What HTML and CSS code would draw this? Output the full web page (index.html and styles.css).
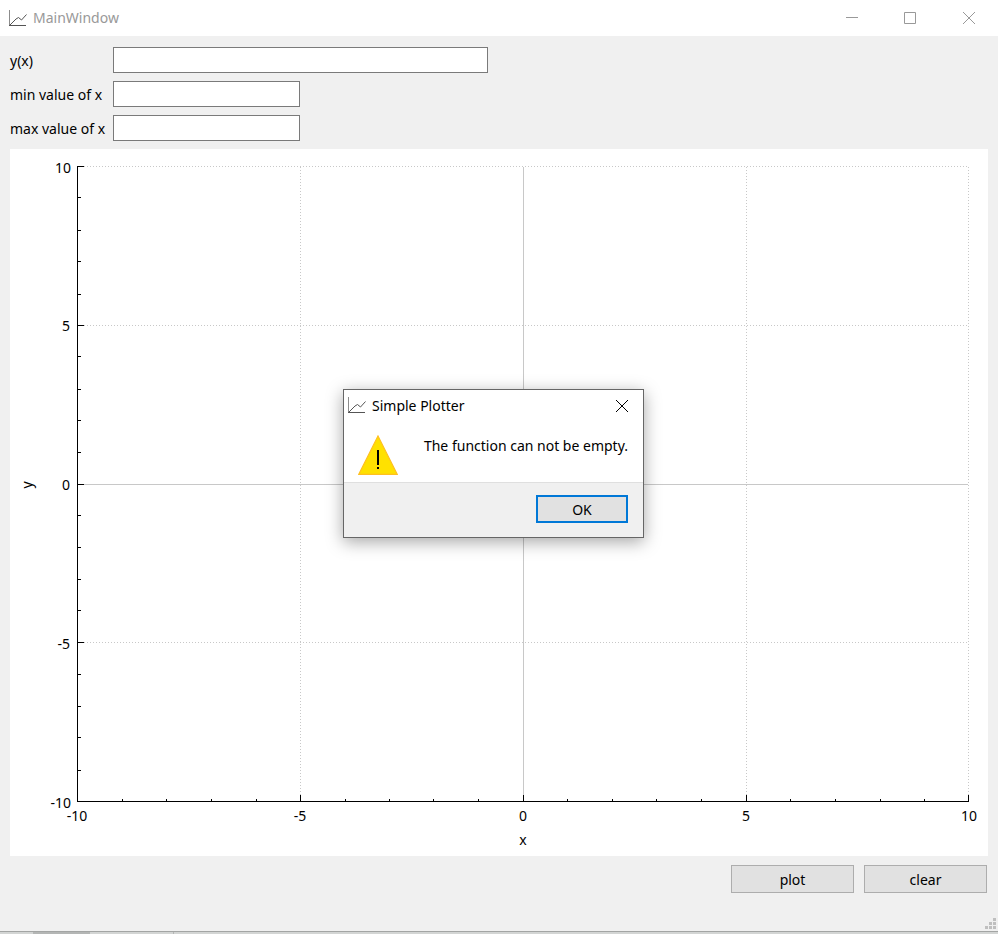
FILE: index.html
```html
<!DOCTYPE html>
<html lang="en">
<head>
<meta charset="utf-8">
<title>MainWindow</title>
<link rel="stylesheet" href="styles.css">
</head>
<body>
<svg class="defs" aria-hidden="true">
  <symbol id="app-icon" viewBox="0 0 18 17">
    <path d="M.5 0V16" stroke="#8c8c8c" fill="none"/>
    <path d="M0 15.500H17" stroke="#555" fill="none"/>
    <path d="M1 15L7 9L9.500 7.500L12.500 10L17.500 4.500" stroke="#555" fill="none"/>
  </symbol>
</svg>
<div class="window">
  <header class="titlebar">
    <svg class="app-icon"><use href="#app-icon"/></svg>
    <h1 class="title">MainWindow</h1>
    <div class="controls">
      <button class="control" type="button" aria-label="Minimize"><svg class="glyph" viewBox="0 0 12 12"><path d="M0 5.500H12"/></svg></button>
      <button class="control" type="button" aria-label="Maximize"><svg class="glyph" viewBox="0 0 12 12"><path d="M.5.5H11.500V11.500H.5Z"/></svg></button>
      <button class="control control-close" type="button" aria-label="Close"><svg class="glyph" viewBox="0 0 12 12"><path d="M0 0L12 12M12 0L0 12"/></svg></button>
    </div>
  </header>
  <main class="content">
    <form class="form">
      <label for="fn">y(x)</label><input class="field field-wide" id="fn" type="text">
      <label for="min">min value of x</label><input class="field" id="min" type="text">
      <label for="max">max value of x</label><input class="field" id="max" type="text">
    </form>
    <svg class="plot" viewBox="0 0 978 707" role="img" aria-label="Empty plot, x and y from -10 to 10">
      <g class="grid">
        <path d="M68 17.500H958M68 176.500H958M68 493.500H958M290.500 18V652M736.500 18V652M958.500 18V652"/>
      </g>
      <path class="zero" d="M68 335.500H958M513.500 18V652"/>
      <path class="axis" d="M67.500 17V653M67 652.500H959"/>
      <path class="axis" d="M67 17.500h7M67 176.500h7M67 335.500h7M67 493.500h7M290.500 653v-7M513.500 653v-7M736.500 653v-7M958.500 653v-7"/>
      <path class="axis" d="M67 48.500h4M67 81.500h4M67 112.500h4M67 145.500h4M67 207.500h4M67 240.500h4M67 271.500h4M67 303.500h4M67 366.500h4M67 398.500h4M67 430.500h4M67 461.500h4M67 525.500h4M67 557.500h4M67 588.500h4M67 621.500h4"/>
      <path class="axis" d="M112.500 653v-3M156.500 653v-3M201.500 653v-3M246.500 653v-3M335.500 653v-3M379.500 653v-3M423.500 653v-3M468.500 653v-3M557.500 653v-3M602.500 653v-3M646.500 653v-3M691.500 653v-3M780.500 653v-3M825.500 653v-3M870.500 653v-3M914.500 653v-3"/>
      <g class="ticks-y">
        <text x="61" y="24">10</text><text x="60" y="182">5</text><text x="60" y="341">0</text><text x="60" y="500">-5</text><text x="61" y="659">-10</text>
      </g>
      <g class="ticks-x">
        <text x="67" y="672">-10</text><text x="290" y="672">-5</text><text x="513" y="672">0</text><text x="736" y="672">5</text><text x="959" y="672">10</text>
        <text x="513" y="696">x</text>
        <text transform="translate(22 336) rotate(-90)">y</text>
      </g>
    </svg>
    <div class="actions">
      <button class="button" type="button">plot</button>
      <button class="button" type="button">clear</button>
    </div>
  </main>
  <footer class="statusbar">
    <svg class="grip" viewBox="0 0 11 11" aria-hidden="true"><path d="M8 0h3v3h-3zM4 4h3v3h-3zM8 4h3v3h-3zM0 8h3v3h-3zM4 8h3v3h-3zM8 8h3v3h-3z"/></svg>
  </footer>
  <div class="dialog" role="alertdialog" aria-labelledby="dialog-title" aria-describedby="dialog-text">
    <div class="dialog-title">
      <svg class="app-icon"><use href="#app-icon"/></svg>
      <h2 class="title" id="dialog-title">Simple Plotter</h2>
      <button class="dialog-close" type="button" aria-label="Close"><svg class="glyph" viewBox="0 0 12 12"><path d="M0 0L12 12M12 0L0 12"/></svg></button>
    </div>
    <div class="dialog-body">
      <svg class="warning" viewBox="0 0 40 40" aria-hidden="true">
        <path d="M20 1L39.300 39.400H.7Z" fill="#ffe100" stroke="#ffc020" stroke-width="1.200"/>
        <path d="M19 15h2v15h-2zM19 32h2v2h-2z" fill="#000"/>
      </svg>
      <p class="message" id="dialog-text">The function can not be empty.</p>
    </div>
    <div class="dialog-footer"><button class="button button-default" type="button">OK</button></div>
  </div>
</div>
<div class="taskbar"><span class="task"></span><span class="task-group"></span></div>
</body>
</html>
```
FILE: styles.css
```css
* { box-sizing: border-box; }
body {
  margin: 0;
  min-height: 100vh;
  display: flex;
  flex-direction: column;
  background: #f0f0f0;
  color: #000;
  font: 14px/20px "Noto Sans", "Open Sans", sans-serif;
}
button, input { font: inherit; color: inherit; }
.defs { position: absolute; width: 0; height: 0; }
.window {
  position: relative;
  flex: 1;
  display: flex;
  flex-direction: column;
  border-bottom: 1px solid #a3a5a4;
}
.titlebar {
  display: flex;
  align-items: center;
  height: 36px;
  padding-left: 9px;
  background: #fff;
  color: #999;
}
.app-icon { width: 18px; height: 17px; flex: none; }
.title { margin: 0 0 0 6px; font-size: 14px; font-weight: 400; }
.controls { display: flex; margin-left: auto; }
.control, .dialog-close {
  display: grid;
  place-items: center;
  padding: 0;
  border: 0;
  background: none;
}
.control { width: 58px; height: 34px; }
.control-close { width: 59px; }
.glyph { width: 12px; height: 12px; fill: none; stroke: currentColor; }
.content { padding: 11px 10px 0; }
.form {
  display: grid;
  grid-template-columns: 95px 1fr;
  gap: 8px;
  align-items: center;
}
.form label { padding-top: 2px; white-space: nowrap; }
.field {
  width: 187px;
  height: 26px;
  padding: 0 4px;
  border: 1px solid #7a7a7a;
  background: #fff;
}
.field-wide { width: 375px; }
.plot { display: block; width: 100%; height: auto; margin-top: 8px; background: #fff; }
.grid { fill: none; stroke: #c8c8c8; stroke-dasharray: 1 2; }
.zero { fill: none; stroke: #c8c8c8; }
.axis { fill: none; stroke: #000; }
.ticks-y { text-anchor: end; }
.ticks-x { text-anchor: middle; }
.actions { display: flex; justify-content: flex-end; gap: 10px; padding: 9px 1px 0 0; }
.button {
  width: 123px;
  height: 28px;
  padding: 2px 0 0;
  border: 1px solid #adadad;
  background: #e1e1e1;
}
.statusbar { display: flex; justify-content: flex-end; align-items: flex-end; flex: 1; padding: 0 2px 2px 0; }
.grip { width: 11px; height: 11px; fill: #bfbfbf; }
.taskbar { display: flex; height: 2px; background: #d3d5d4; }
.task { width: 57px; margin-left: 33px; background: #b4b6b5; }
.task-group { width: 84px; border-right: 1px solid #b4b6b5; }
.dialog {
  position: absolute;
  top: 389px;
  left: 343px;
  width: 301px;
  border: 1px solid #666;
  background: #fff;
  box-shadow: 0 4px 16px rgba(0, 0, 0, .35);
}
.dialog-title { display: flex; align-items: center; height: 31px; padding-left: 4px; }
.dialog-close { width: 42px; height: 30px; margin-left: auto; }
.dialog-body { display: flex; justify-content: space-between; height: 61px; padding: 14px 15px 0 14px; }
.warning { width: 40px; height: 40px; }
.message { margin: 0; padding-top: 1px; white-space: nowrap; }
.dialog-footer {
  display: flex;
  justify-content: flex-end;
  height: 55px;
  padding: 12px 15px 0;
  border-top: 1px solid #dfdfdf;
  background: #f0f0f0;
}
.button-default { width: 92px; border: 2px solid #0078d7; }
```
